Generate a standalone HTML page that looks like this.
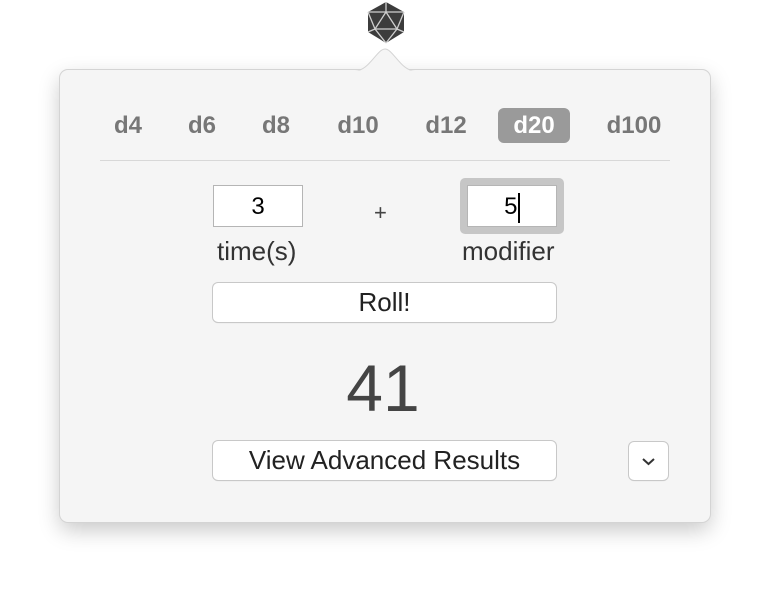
<!DOCTYPE html><html><head><style>
body{margin:0;width:770px;height:590px;background:#fff;font-family:"Liberation Sans",sans-serif;position:relative;overflow:hidden}
.pop{position:absolute;left:60px;top:70px;width:650px;height:452px;background:#f5f5f5;border-radius:8px;box-shadow:0 0 0 1px #d4d4d4,0 8px 22px rgba(0,0,0,.22)}
.tab{position:absolute;top:108px;height:35px;line-height:35px;font-weight:bold;font-size:24px;color:#777;text-align:center}
.sel{background:#9a9a9a;color:#fff;border-radius:6px}
.inp{position:absolute;background:#fff;border:1px solid #b5b5b5;font-size:24px;text-align:center;line-height:42px;box-sizing:border-box}
.lbl{position:absolute;font-size:26px;color:#333}
.btn{position:absolute;background:#fff;border-radius:5px;box-shadow:0 0 0 1px #c8c8c8,0 1px 1px rgba(0,0,0,.15);text-align:center;font-size:26px;color:#222}
</style></head><body>
<svg style="position:absolute;left:364px;top:0" width="44" height="46" viewBox="0 0 44 46">
<polygon points="22,2 40,12 40,32 22,43 4,32 4,12" fill="#3c3c3c"/>
<g stroke="#cfcfcf" stroke-width="1.3" fill="none"><polygon points="22,12 33,29 11,29"/><path d="M22,2 22,12 M4,12 11,29 M40,12 33,29 M22,43 11,29 M22,43 33,29 M4,12 22,12 40,12 M4,32 11,29 M40,32 33,29"/></g></svg>
<div class="pop"></div>
<svg style="position:absolute;left:355px;top:46px" width="60" height="26" viewBox="0 0 60 26"><path d="M0,25 C14,25 22,3 30,3 C38,3 46,25 60,25 Z" fill="#f5f5f5" stroke="#d4d4d4"/><rect x="0" y="24.5" width="60" height="3" fill="#f5f5f5"/></svg>
<div class="tab" style="left:106px;width:44px">d4</div>
<div class="tab" style="left:180px;width:44px">d6</div>
<div class="tab" style="left:254px;width:44px">d8</div>
<div class="tab" style="left:326px;width:64px">d10</div>
<div class="tab" style="left:414px;width:64px">d12</div>
<div class="tab sel" style="left:498px;width:72px">d20</div>
<div class="tab" style="left:596px;width:76px">d100</div>
<div style="position:absolute;left:100px;top:160px;width:570px;height:1px;background:#d8d8d8"></div>
<div class="inp" style="left:213px;top:185px;width:90px;height:42px">3</div>
<div style="position:absolute;left:374px;top:200px;font-size:22px;color:#444">+</div>
<div style="position:absolute;left:460px;top:178px;width:104px;height:56px;background:#c6c6c6;border-radius:5px"></div>
<div class="inp" style="left:467px;top:185px;width:90px;height:42px">5<span style="display:inline-block;width:1.5px;height:30px;background:#000;vertical-align:middle;margin-left:1px"></span></div>
<div class="lbl" style="left:217px;top:236px">time(s)</div>
<div class="lbl" style="left:462px;top:236px">modifier</div>
<div class="btn" style="left:213px;top:283px;width:343px;height:39px;line-height:39px">Roll!</div>
<div style="position:absolute;left:283px;width:200px;top:348px;text-align:center;font-size:66px;color:#444;line-height:80px">41</div>
<div class="btn" style="left:213px;top:441px;width:343px;height:39px;line-height:39px">View Advanced Results</div>
<div class="btn" style="left:629px;top:442px;width:39px;height:38px"><svg width="39" height="38"><path d="M14,17 19.5,22 25,17" stroke="#333" stroke-width="2" fill="none"/></svg></div>
</body></html>
